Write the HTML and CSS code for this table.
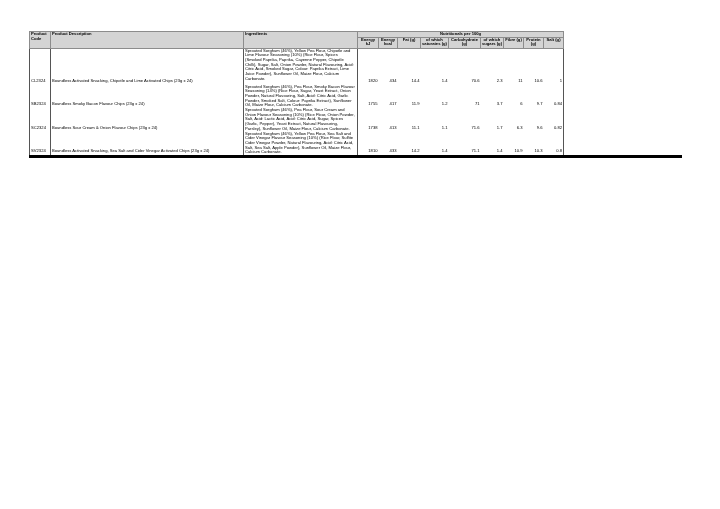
FILE: index.html
```html
<!DOCTYPE html>
<html>
<head>
<meta charset="utf-8">
<link rel="stylesheet" href="styles.css">
</head>
<body>
<div class="sheet">
  <table class="spec">
    <colgroup>
      <col class="c-code"><col class="c-desc"><col class="c-ing">
      <col class="c-kj"><col class="c-kcal"><col class="c-fat"><col class="c-sat">
      <col class="c-carb"><col class="c-sug"><col class="c-fib"><col class="c-pro"><col class="c-salt">
    </colgroup>
    <thead>
      <tr class="h1">
        <th rowspan="2" class="hl">Product<br>Code</th>
        <th rowspan="2" class="hl">Product Description</th>
        <th rowspan="2" class="hl">Ingredients</th>
        <th colspan="9" class="hc">Nutritionals per 100g</th>
      </tr>
      <tr class="h2">
        <th>Energy<br>kJ</th>
        <th>Energy<br>kcal</th>
        <th>Fat (g)</th>
        <th>of which<br>saturates (g)</th>
        <th>Carbohydrate<br>(g)</th>
        <th>of which<br>sugars (g)</th>
        <th>Fibre (g)</th>
        <th>Protein<br>(g)</th>
        <th>Salt (g)</th>
      </tr>
    </thead>
    <tbody>
      <tr class="r1">
        <td class="code">CL2324</td>
        <td class="desc">Boundless Activated Snacking, Chipotle and Lime Activated Chips (23g x 24)</td>
        <td class="ing">Sprouted Sorghum (46%), Yellow Pea Flour, Chipotle and<br>Lime Flavour Seasoning (10%) (Rice Flour, Spices<br>(Smoked Paprika, Paprika, Cayenne Pepper, Chipotle<br>Chilli), Sugar, Salt, Onion Powder, Natural Flavouring, Acid:<br>Citric Acid, Smoked Sugar, Colour: Paprika Extract, Lime<br>Juice Powder), Sunflower Oil, Maize Flour, Calcium<br>Carbonate.</td>
        <td class="num first">1820</td><td class="num">434</td><td class="num">14.4</td><td class="num">1.4</td><td class="num">70.6</td><td class="num">2.3</td><td class="num">11</td><td class="num">10.6</td><td class="num last">1</td>
      </tr>
      <tr class="r2">
        <td class="code">SB2324</td>
        <td class="desc">Boundless Smoky Bacon Flavour Chips (23g x 24)</td>
        <td class="ing">Sprouted Sorghum (46%), Pea Flour, Smoky Bacon Flavour<br>Seasoning (14%) (Rice Flour, Sugar, Yeast Extract, Onion<br>Powder, Natural Flavouring, Salt, Acid: Citric Acid, Garlic<br>Powder, Smoked Salt, Colour: Paprika Extract), Sunflower<br>Oil, Maize Flour, Calcium Carbonate.</td>
        <td class="num first">1755</td><td class="num">417</td><td class="num">11.9</td><td class="num">1.2</td><td class="num">71</td><td class="num">3.7</td><td class="num">6</td><td class="num">9.7</td><td class="num last">0.84</td>
      </tr>
      <tr class="r3">
        <td class="code">SC2324</td>
        <td class="desc">Boundless Sour Cream &amp; Onion Flavour Chips (23g x 24)</td>
        <td class="ing">Sprouted Sorghum (46%), Pea Flour, Sour Cream and<br>Onion Flavour Seasoning (10%) (Rice Flour, Onion Powder,<br>Salt, Acid: Lactic Acid, Acid: Citric Acid, Sugar, Spices<br>(Garlic, Pepper), Yeast Extract, Natural Flavouring,<br>Parsley), Sunflower Oil, Maize Flour, Calcium Carbonate.</td>
        <td class="num first">1738</td><td class="num">413</td><td class="num">11.1</td><td class="num">1.1</td><td class="num">71.6</td><td class="num">1.7</td><td class="num">6.3</td><td class="num">9.6</td><td class="num last">0.82</td>
      </tr>
      <tr class="r4">
        <td class="code">SV2324</td>
        <td class="desc">Boundless Activated Snacking, Sea Salt and Cider Vinegar Activated Chips (23g x 24)</td>
        <td class="ing">Sprouted Sorghum (46%), Yellow Pea Flour, Sea Salt and<br>Cider Vinegar Flavour Seasoning (10%) (Rice Flour, Sulfite<br>Cider Vinegar Powder, Natural Flavouring, Acid: Citric Acid,<br>Salt, Sea Salt, Apple Powder), Sunflower Oil, Maize Flour,<br>Calcium Carbonate.</td>
        <td class="num first">1810</td><td class="num">433</td><td class="num">14.2</td><td class="num">1.4</td><td class="num">71.1</td><td class="num">1.4</td><td class="num">10.9</td><td class="num">10.3</td><td class="num last">0.8</td>
      </tr>
    </tbody>
  </table>
</div>
</body>
</html>
```
FILE: styles.css
```css
html, body {
  margin: 0;
  padding: 0;
  background: #ffffff;
}
body {
  padding: 31px 0 0 29px;
  font-family: "Liberation Sans", Arial, sans-serif;
  color: #000;
}
.sheet {
  width: 653px;
  border-bottom: 3px solid #000;
  will-change: transform;
}
.spec {
  border-collapse: collapse;
  table-layout: fixed;
  width: 534px;
  font-size: 4.15px;
  line-height: 4.7px;
}
.c-code { width: 21px; }
.c-desc { width: 193px; }
.c-ing { width: 114px; }
.c-kj { width: 21px; }
.c-kcal { width: 19px; }
.c-fat { width: 23px; }
.c-sat { width: 28px; }
.c-carb { width: 32px; }
.c-sug { width: 23px; }
.c-fib { width: 20px; }
.c-pro { width: 20px; }
.c-salt { width: 20px; }

.spec th {
  background: #d4d4d4;
  border: 1px solid #8c8c8c;
  font-weight: bold;
  padding: 0 1px;
  text-align: center;
  vertical-align: top;
  overflow: hidden;
  white-space: nowrap;
}
.spec th.hl { text-align: left; }
.h1 { height: 5px; }
.h1 .hc { line-height: 4.5px; }
.h2 { height: 11px; }
.h2 th { padding-top: 0.5px; line-height: 4.4px; }

.spec td {
  padding: 0 1px 1px 1px;
  white-space: nowrap;
  overflow: hidden;
  vertical-align: bottom;
  border: 0;
}
.spec td.code { border-left: 1px solid #555; border-right: 1px solid #555; }
.spec td.desc { border-right: 1px solid #555; }
.spec td.ing { vertical-align: top; padding: 0 1px; }
.spec td.num { text-align: right; }
.spec td.first { border-left: 1px solid #555; }
.spec td.last { border-right: 1px solid #555; }

.r1 { height: 36.5px; }
.r2 { height: 23.5px; }
.r3 { height: 23.5px; }
.r4 { height: 23.5px; }
```
